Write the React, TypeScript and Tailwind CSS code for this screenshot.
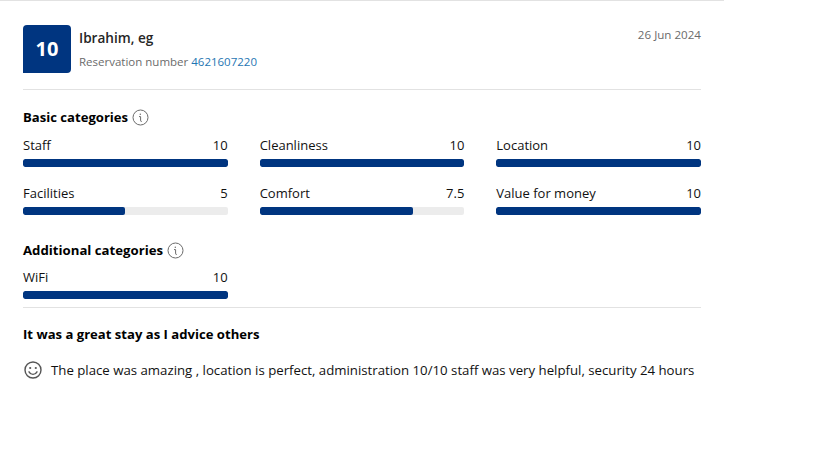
const FONT = "font-['Open_Sans','Noto_Sans',sans-serif]";

const BASIC = [
  { label: 'Staff', score: 10 },
  { label: 'Cleanliness', score: 10 },
  { label: 'Location', score: 10 },
  { label: 'Facilities', score: 5 },
  { label: 'Comfort', score: 7.5 },
  { label: 'Value for money', score: 10 },
];

function InfoIcon() {
  return (
    <svg width="17" height="17" viewBox="0 0 17 17" fill="none" stroke="#6b6b6b" strokeWidth="1">
      <circle cx="8.5" cy="8.5" r="7.5" />
      <circle cx="8.3" cy="5.2" r="0.7" fill="#6b6b6b" stroke="none" />
      <path d="M7.4 7.6h1.2v4.2c0 .5.3.7.9.6" strokeLinecap="round" />
    </svg>
  );
}

function SmileIcon() {
  return (
    <svg width="18" height="18" viewBox="0 0 18 18" fill="none" stroke="#555" strokeWidth="1.4">
      <circle cx="9" cy="9" r="8" />
      <circle cx="6.2" cy="7" r="1.1" fill="#555" stroke="none" />
      <circle cx="11.8" cy="7" r="1.1" fill="#555" stroke="none" />
      <path d="M5 10.8c1 1.8 2.4 2.6 4 2.6s3-.8 4-2.6" strokeLinecap="round" />
    </svg>
  );
}

function ScoreBar({ label, score }: { label: string; score: number }) {
  return (
    <div>
      <div className="flex justify-between h-[20px] leading-[20px] text-[13px] text-[#111]">
        <span>{label}</span>
        <span>{score}</span>
      </div>
      <div className="mt-[4px] h-[8px] rounded-[2px] bg-[#ececec] overflow-hidden">
        <div className="h-full rounded-[2px] bg-[#003580]" style={{ width: `${score * 10}%` }} />
      </div>
    </div>
  );
}

export default function App() {
  return (
    <div className={`${FONT} w-[819px] h-[460px] bg-white overflow-hidden`}>
      <div className="w-[724px] border-t border-[#e2e2e2] pl-[23px] pr-[23px]">
        {/* Guest header */}
        <div className="flex justify-between pt-[24px] pb-[16px] border-b border-[#e2e2e2]">
          <div className="flex gap-[8px]">
            <div className="w-[48px] h-[48px] flex items-center justify-center rounded-[4px] rounded-bl-none bg-[#003580] text-white text-[20px] font-bold">
              10
            </div>
            <div>
              <div className="mt-[3px] h-[20px] leading-[20px] text-[13.6px] font-semibold text-[#262626]">Ibrahim, eg</div>
              <div className="mt-[4px] h-[20px] leading-[20px] text-[11.5px] font-medium text-[#6b6b6b]">
                Reservation number <span className="font-normal text-[#1f76b3]">4621607220</span>
              </div>
            </div>
          </div>
          <div className="h-[20px] leading-[20px] text-[11.6px] text-[#6b6b6b]">26 Jun 2024</div>
        </div>

        {/* Scores */}
        <div className="mt-[17px] flex items-center gap-[4px] h-[20px] leading-[22px] text-[13.1px] font-bold text-black">
          Basic categories <InfoIcon />
        </div>
        <div className="mt-[8px] grid grid-cols-3 gap-x-[32px] gap-y-[16px]">
          {BASIC.map((item) => (
            <ScoreBar key={item.label} label={item.label} score={item.score} />
          ))}
        </div>

        <div className="mt-[25px] flex items-center gap-[4px] h-[20px] leading-[22px] text-[13.2px] font-bold text-black">
          Additional categories <InfoIcon />
        </div>
        <div className="mt-[7px] grid grid-cols-3 gap-x-[32px]">
          <ScoreBar label="WiFi" score={10} />
        </div>

        {/* Review */}
        <div className="mt-[8px] border-t border-[#e2e2e2]">
          <div className="mt-[16px] h-[20px] leading-[20px] text-[13.1px] font-bold text-black">
            It was a great stay as I advice others
          </div>
          <div className="mt-[16px] flex items-center gap-[9px] h-[20px] leading-[22px] text-[13.22px] text-[#111] whitespace-nowrap">
            <span className="ml-[1px]"><SmileIcon /></span>
            The place was amazing , location is perfect, administration 10/10 staff was very helpful, security 24 hours
          </div>
        </div>
      </div>
    </div>
  );
}
